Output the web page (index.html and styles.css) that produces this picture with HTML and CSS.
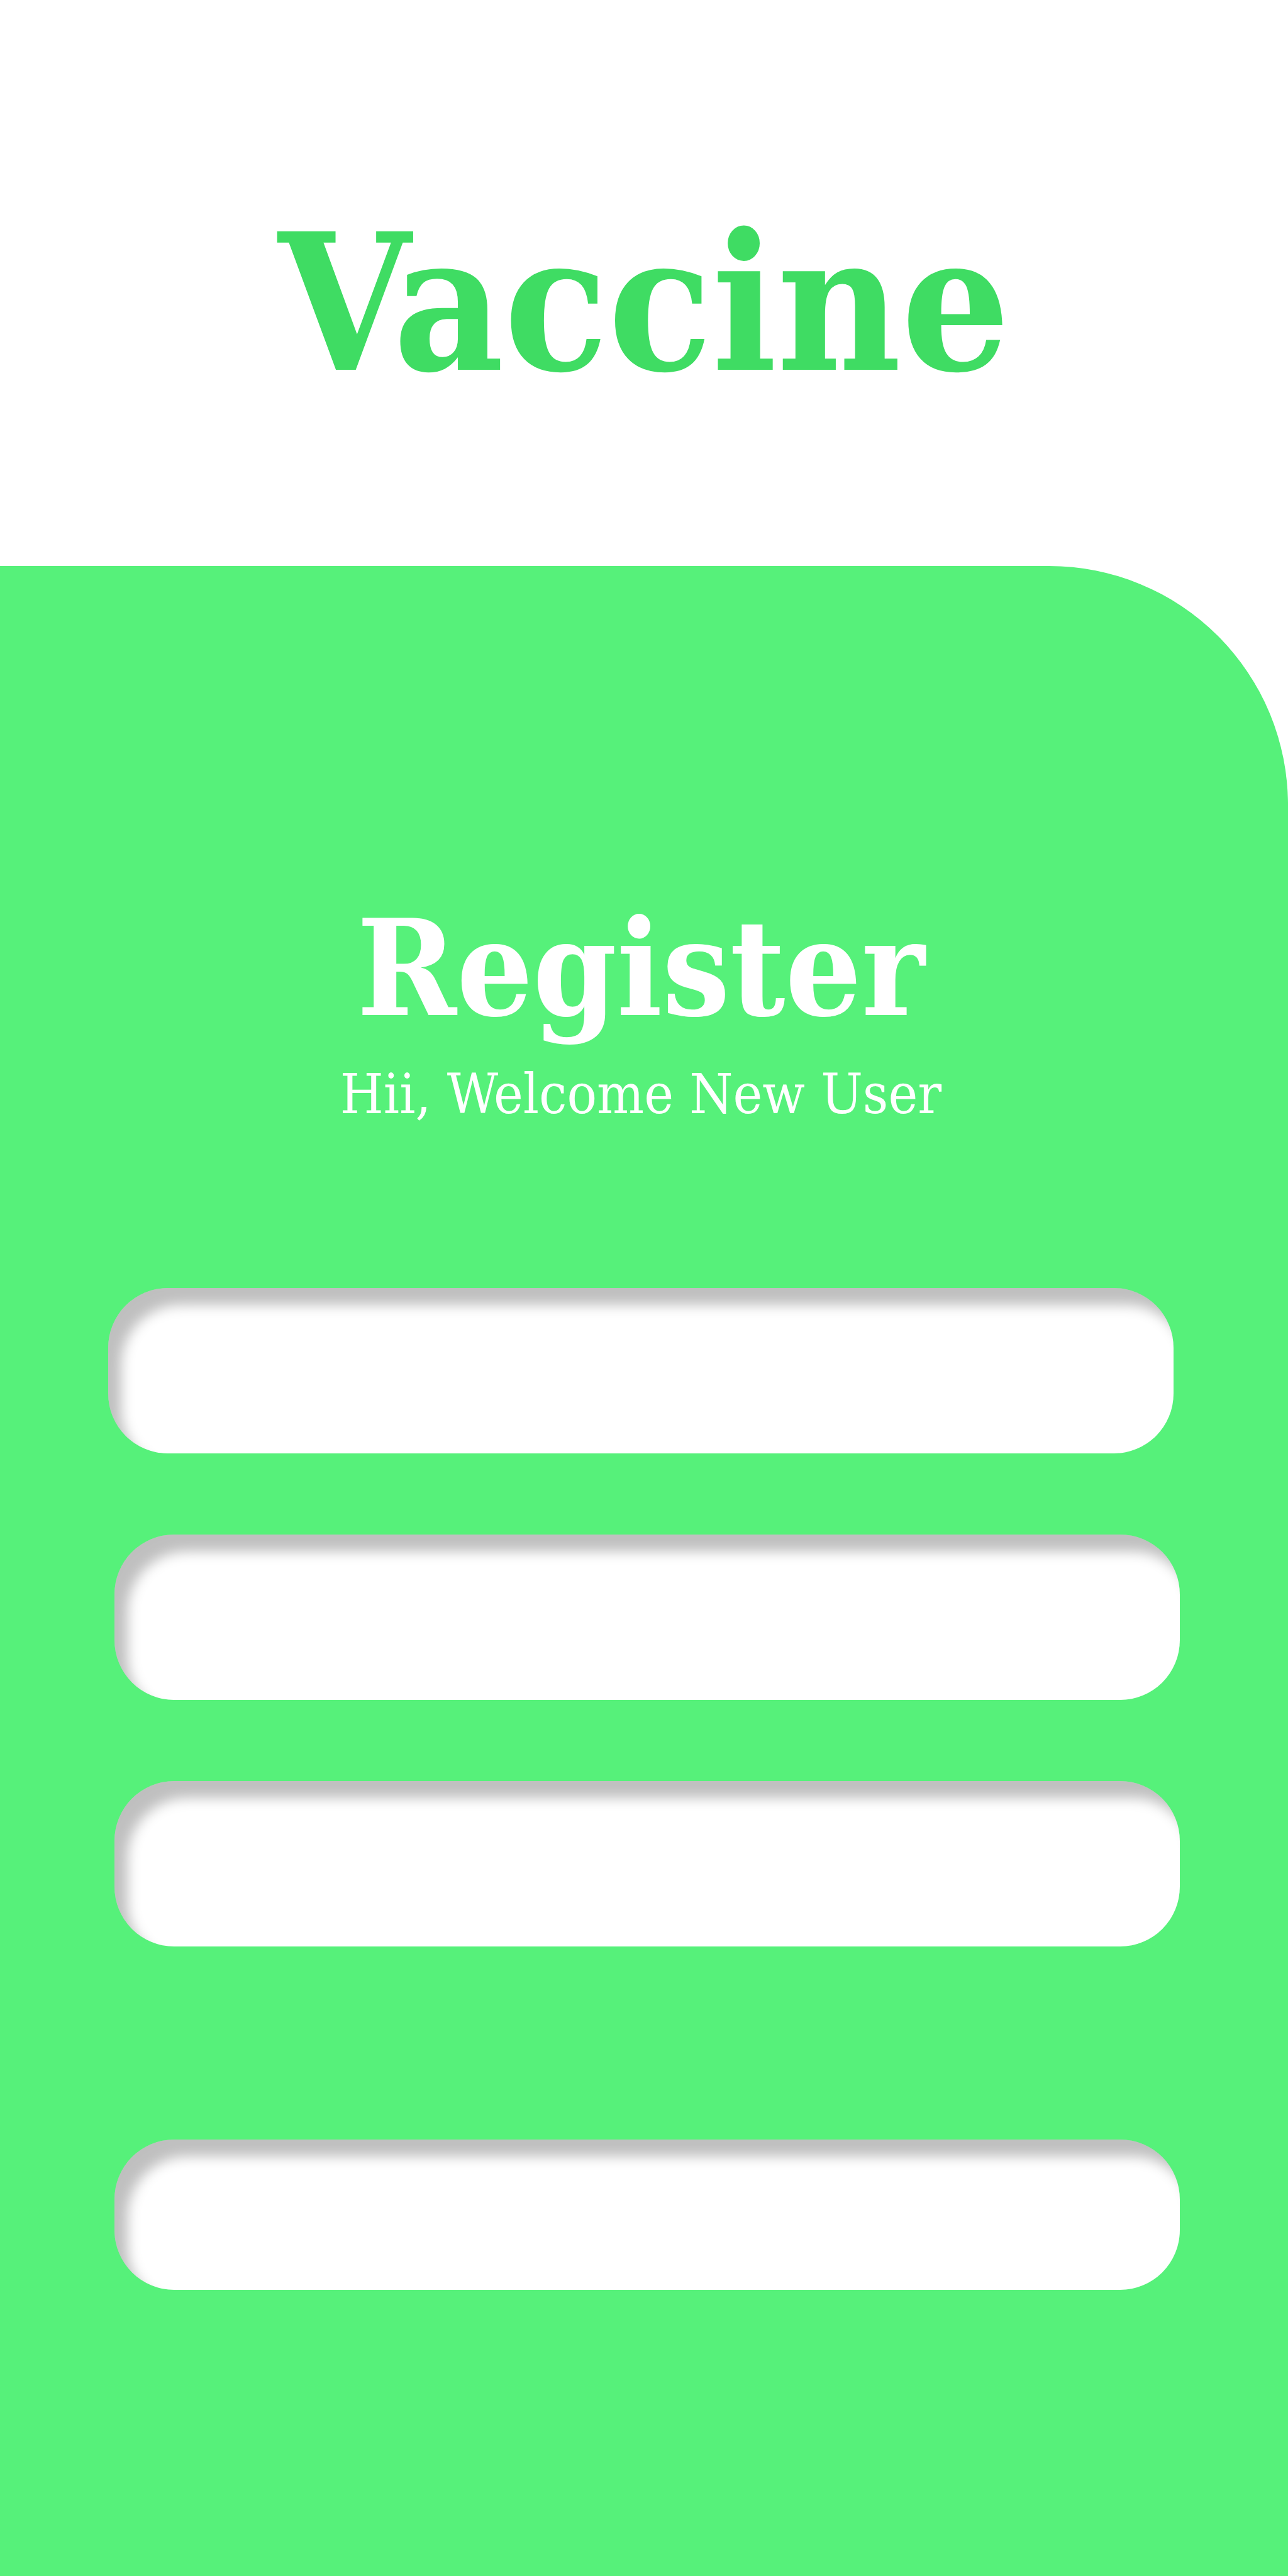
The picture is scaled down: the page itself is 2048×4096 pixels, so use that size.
FILE: index.html
```html
<!DOCTYPE html>
<html lang="en">
<head>
  <meta charset="utf-8">
  <meta name="viewport" content="width=device-width, initial-scale=1">
  <title>Vaccine</title>
  <link rel="stylesheet" href="styles.css">
</head>
<body class="page">
  <header class="brand">
    <h1 class="brand-name">Vaccine</h1>
  </header>
  <main class="panel">
    <h2 class="panel-title">Register</h2>
    <p class="panel-lead">Hii, Welcome New User</p>
    <form class="form">
      <input class="field field-first" type="text" aria-label="Name">
      <input class="field" type="email" aria-label="Email">
      <input class="field" type="password" aria-label="Password">
      <button class="field submit" type="button" aria-label="Register"></button>
    </form>
  </main>
</body>
</html>
```

FILE: styles.css
```css
* {
  box-sizing: border-box;
}

.page {
  display: flex;
  flex-direction: column;
  min-height: 100vh;
  margin: 0;
  background: #fff;
  font-family: "Roboto Slab", "DejaVu Serif Condensed", "DejaVu Serif", serif;
}

.brand {
  padding: 282px 0 218px;
  text-align: center;
}

.brand-name {
  margin: 0;
  color: #3fdc63;
  font-size: 302px;
  font-weight: 700;
  line-height: 400px;
}

.panel {
  flex: 1;
  padding: 500px 182px 400px 172px;
  border-top-right-radius: 380px;
  background: #56f17a;
  color: #fff;
}

.panel-title {
  margin: 0;
  font-size: 212px;
  font-weight: 700;
  line-height: 280px;
  text-align: center;
}

.panel-lead {
  margin: 0;
  font-size: 88px;
  line-height: 120px;
  text-align: center;
}

.form {
  display: flex;
  flex-direction: column;
  gap: 129px;
  margin: 248px -10px 0 10px;
}

.field {
  height: 263px;
  padding: 0 96px;
  border: 0;
  border-radius: 95px;
  background: #fff;
  box-shadow: inset 21px 27px 20px rgba(0, 0, 0, 0.25);
  font: inherit;
  font-size: 88px;
}

.field-first {
  margin: 0 10px 0 -10px;
}

.submit {
  height: 239px;
  margin-top: 178px;
}
```
